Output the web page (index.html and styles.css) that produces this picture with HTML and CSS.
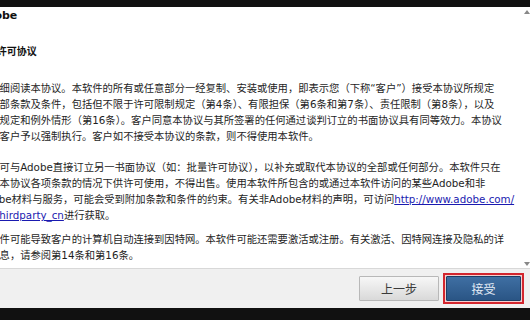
FILE: index.html
```html
<!DOCTYPE html>
<html lang="zh-CN">
<head>
    <meta charset="UTF-8">
    <meta name="viewport" content="width=device-width, initial-scale=1.0">
    <title>Adobe 软件许可协议</title>
    <link rel="stylesheet" href="styles.css">
</head>
<body>

<div class="topbar"></div>

<div class="content">
    <div class="doc">
        <div class="brand">Adobe</div>
        <h2 class="title">Adobe软件许可协议</h2>

        <p>
            <span class="line">请仔细阅读本协议。本软件的所有或任意部分一经复制、安装或使用，即表示您（下称“客户”）接受本协议所规定</span>
            <span class="line">的全部条款及条件，包括但不限于许可限制规定（第4条）、有限担保（第6条和第7条）、责任限制（第8条），以及</span>
            <span class="line">特定规定和例外情形（第16条）。客户同意本协议与其所签署的任何通过谈判订立的书面协议具有同等效力。本协议</span>
            <span class="line">可对客户予以强制执行。客户如不接受本协议的条款，则不得使用本软件。</span>
        </p>

        <p>
            <span class="line">客户可与Adobe直接订立另一书面协议（如：批量许可协议），以补充或取代本协议的全部或任何部分。本软件只在</span>
            <span class="line">遵守本协议各项条款的情况下供许可使用，不得出售。使用本软件所包含的或通过本软件访问的某些Adobe和非</span>
            <span class="line">Adobe材料与服务，可能会受到附加条款和条件的约束。有关非Adobe材料的声明，可访问<a href="#">http://www.adobe.com/</a></span>
            <span class="line"><a href="#">go/thirdparty_cn</a>进行获取。</span>
        </p>

        <p>
            <span class="line">本软件可能导致客户的计算机自动连接到因特网。本软件可能还需要激活或注册。有关激活、因特网连接及隐私的详</span>
            <span class="line">细信息，请参阅第14条和第16条。</span>
        </p>
    </div>
    <span class="scroll-up"></span>
    <span class="scroll-down"></span>
</div>

<div class="footer">
    <button type="button" class="btn btn-back">上一步</button>
    <div class="focus-ring">
        <button type="button" class="btn btn-accept">接受</button>
    </div>
</div>

<div class="bottombar"></div>

</body>
</html>
```

FILE: styles.css
```css
body {
    margin: 0;
    width: 530px;
    height: 320px;
    overflow: hidden;
    background-color: #fff;
    font-family: "DejaVu Sans", "Noto Sans CJK SC", sans-serif;
    color: #1e1e1e;
}

.topbar {
    height: 7px;
    background-color: #111;
}

.content {
    position: relative;
    height: 261px;
    overflow: hidden;
}

.doc {
    margin-left: -21px;
    white-space: nowrap;
}

.brand {
    margin-left: -1px;
    padding-top: 2px;
    font-size: 11px;
    font-weight: bold;
    line-height: 14px;
    color: #111;
}

.title {
    margin: 22px 0 0 -38px;
    font-size: 10px;
    font-weight: bold;
    line-height: 14px;
    color: #111;
}

.doc p {
    margin: 0;
    font-size: 10.3px;
    line-height: 16px;
}

.doc p + p {
    margin-top: 15px;
}

.doc p:first-of-type {
    margin-top: 21px;
}

.doc p:last-of-type {
    margin-top: 8px;
}

.line {
    display: block;
}

.doc a {
    color: #1a1ab0;
    text-decoration: underline;
}

.scroll-up,
.scroll-down {
    position: absolute;
    right: 0;
    width: 0;
    height: 0;
    border-left: 3px solid transparent;
    border-right: 3px solid transparent;
}

.scroll-up {
    top: 3px;
    border-bottom: 4px solid #888;
}

.scroll-down {
    bottom: 2px;
    border-top: 4px solid #888;
}

.footer {
    height: 39px;
    border-top: 1px solid #d8d8d8;
    background-color: #f0f0f0;
    display: flex;
    align-items: center;
    justify-content: flex-end;
    gap: 4px;
    padding-right: 6px;
}

.btn {
    height: 25px;
    border-radius: 1px;
    font-family: "Noto Sans CJK SC", sans-serif;
    font-size: 12px;
    cursor: pointer;
    padding: 0;
}

.btn-back {
    width: 80px;
    color: #3a3a3a;
    border: 1px solid #b8b8b8;
    background: linear-gradient(#f7f7f7, #d9d9d9);
}

.focus-ring {
    border: 2px solid #d3262e;
    padding: 1px;
    background-color: #f4cfd0;
    display: flex;
}

.btn-accept {
    width: 75px;
    color: #e4ecf6;
    border: 1px solid #1d3d63;
    background: linear-gradient(#3f6fa3, #2a5585);
}

.bottombar {
    height: 13px;
    background-color: #111;
}
```
